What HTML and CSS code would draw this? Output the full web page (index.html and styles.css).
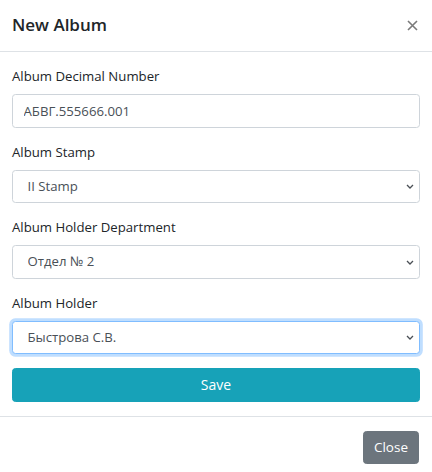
FILE: index.html
```html
<!DOCTYPE html>
<html lang="en">
<head>
<meta charset="utf-8">
<title>New Album</title>
<link rel="stylesheet" href="styles.css">
</head>
<body>
<div class="modal">
  <div class="modal-header">
    <h5 class="modal-title">New Album</h5>
    <button type="button" class="close" aria-label="Close">
      <svg width="11" height="11" viewBox="0 0 11 11"><path d="M1 1l9 9M10 1l-9 9" fill="none" stroke="#7a7a7a" stroke-width="1.6"/></svg>
    </button>
  </div>
  <div class="modal-body">
    <div class="form-group">
      <label class="label">Album Decimal Number</label>
      <input class="form-control" type="text" value="АБВГ.555666.001">
    </div>
    <div class="form-group">
      <label class="label">Album Stamp</label>
      <div class="select-wrap">
        <select class="form-control select"><option>II Stamp</option></select>
        <svg class="chev" width="8" height="5" viewBox="0 0 8 5"><path d="M1 1l3 3 3-3" fill="none" stroke="#4a4f55" stroke-width="1.3"/></svg>
      </div>
    </div>
    <div class="form-group">
      <label class="label">Album Holder Department</label>
      <div class="select-wrap">
        <select class="form-control select"><option>Отдел № 2</option></select>
        <svg class="chev" width="8" height="5" viewBox="0 0 8 5"><path d="M1 1l3 3 3-3" fill="none" stroke="#4a4f55" stroke-width="1.3"/></svg>
      </div>
    </div>
    <div class="form-group">
      <label class="label">Album Holder</label>
      <div class="select-wrap">
        <select class="form-control select focus"><option>Быстрова С.В.</option></select>
        <svg class="chev" width="8" height="5" viewBox="0 0 8 5"><path d="M1 1l3 3 3-3" fill="none" stroke="#4a4f55" stroke-width="1.3"/></svg>
      </div>
    </div>
    <button type="button" class="btn btn-info">Save</button>
  </div>
  <div class="modal-footer">
    <button type="button" class="btn btn-secondary">Close</button>
  </div>
</div>
</body>
</html>
```
FILE: styles.css
```css
* { box-sizing: border-box; }
html, body { margin: 0; padding: 0; background: #fff; }
body {
  font-family: "Open Sans", "Noto Sans", sans-serif;
  font-size: 13.2px;
  line-height: 21px;
  color: #212529;
}
.modal { width: 432px; }
.modal-header {
  display: flex;
  align-items: center;
  justify-content: space-between;
  height: 52px;
  padding: 0 14px 1px 12px;
  border-bottom: 1px solid #dee2e6;
}
.modal-title {
  margin: 0;
  font-size: 17px;
  font-weight: 600;
  line-height: 26px;
}
.close {
  display: flex;
  padding: 0;
  margin: 1px 0 0 0;
  background: none;
  border: 0;
}
.modal-body { padding: 14px 12px 14px; }
.form-group { margin-bottom: 14px; }
.label { display: block; margin-bottom: 7px; }
.form-control {
  display: block;
  width: 100%;
  height: 33.5px;
  padding: 5px 10.5px;
  font-family: inherit;
  font-size: 13.2px;
  line-height: 21px;
  color: #495057;
  background: #fff;
  border: 1px solid #ced4da;
  border-radius: 3.5px;
  outline: none;
}
.select-wrap { position: relative; }
.select {
  appearance: none;
  -webkit-appearance: none;
  padding-left: 14.5px;
}
.chev {
  position: absolute;
  right: 6px;
  top: 14.5px;
  pointer-events: none;
}
.focus {
  border-color: #80bdff;
  box-shadow: 0 0 0 2.8px rgba(0,123,255,.25);
}
.btn {
  display: inline-block;
  font-family: inherit;
  font-size: 14px;
  line-height: 21px;
  padding: 5.25px 10.5px;
  border: 1px solid transparent;
  border-radius: 3.5px;
  color: #fff;
  text-align: center;
}
.btn-info {
  display: block;
  width: 100%;
  background: #17a2b8;
  border-color: #17a2b8;
}
.modal-footer {
  display: flex;
  justify-content: flex-end;
  padding: 14px 13px;
  border-top: 1px solid #dee2e6;
}
.btn-secondary {
  padding: 5.25px 10px;
  background: #6c757d;
  border-color: #6c757d;
  font-size: 13.5px;
}
```
